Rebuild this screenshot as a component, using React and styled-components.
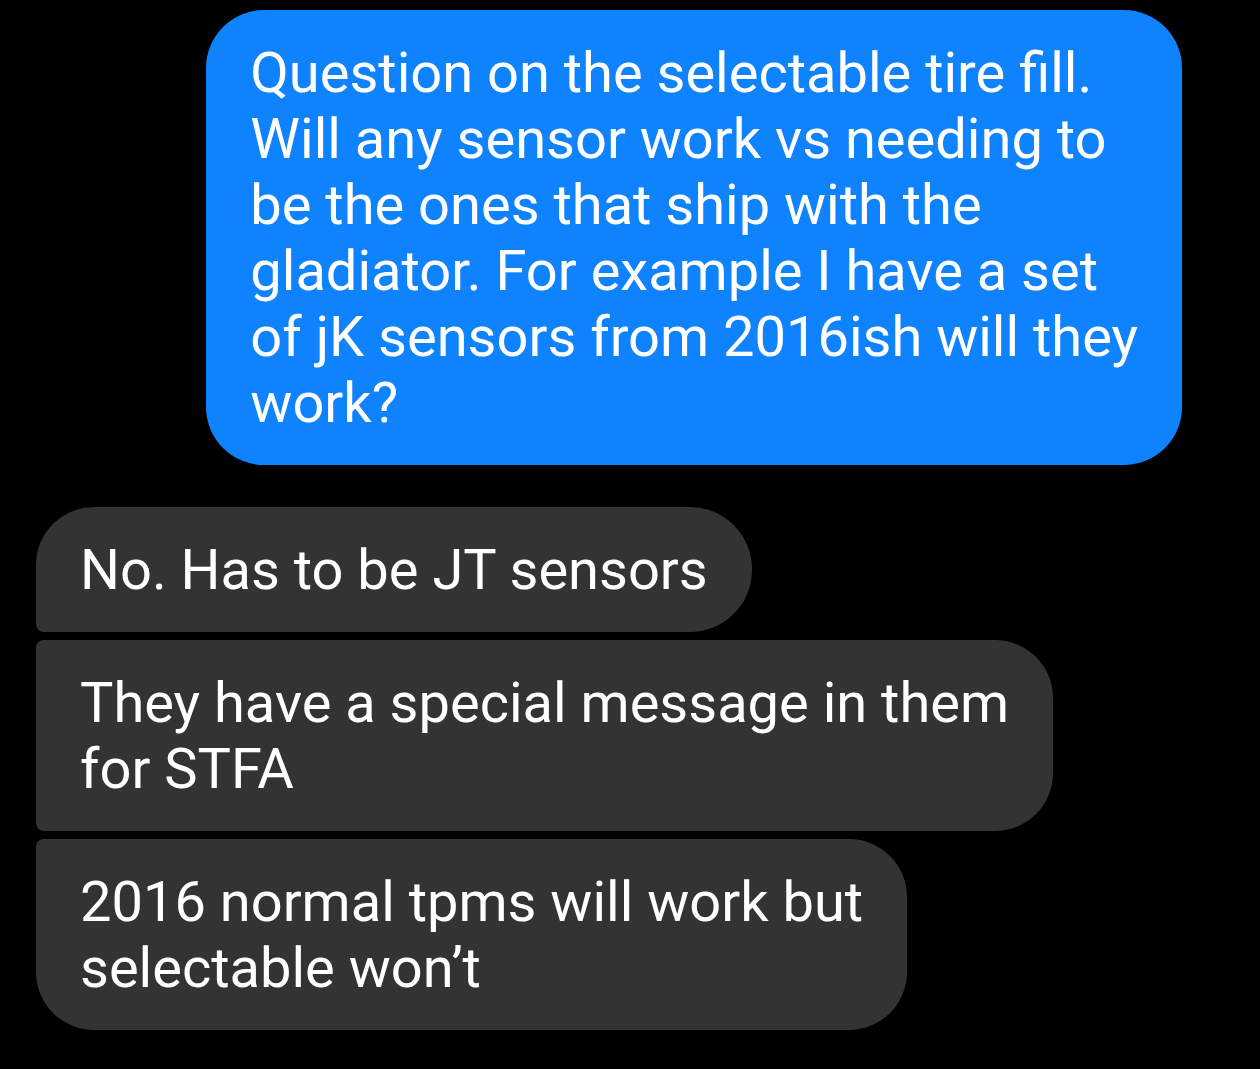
import React from 'react';
import styled, { createGlobalStyle } from 'styled-components';

const GlobalStyle = createGlobalStyle`
	html, body {
		margin: 0;
		padding: 0;
		background: #000;
	}
	body {
		font-family: Roboto, 'Noto Sans', sans-serif;
	}
`;

const Screen = styled.div`
	background: #000;
	display: flex;
	flex-flow: column nowrap;
	min-height: 1069px;
	padding: 10px 78px 0 36px;
	box-sizing: border-box;
`;

const Group = styled.div`
	display: flex;
	flex-flow: column nowrap;
	align-items: ${props => (props.mine ? 'flex-end' : 'flex-start')};
	gap: 8px;
	margin-bottom: 42px;
`;

const Bubble = styled.div`
	background: ${props => (props.mine ? '#0f82fd' : '#333333')};
	color: #fff;
	font-size: 56px;
	line-height: 66px;
	padding: 30px 44px 29px 44px;
	border-radius: ${props => props.radius};
	width: fit-content;
	white-space: nowrap;
`;

const Lines = ({ lines }) =>
	lines.map((line, i) => (
		<React.Fragment key={i}>
			{line}
			{i < lines.length - 1 && <br />}
		</React.Fragment>
	));

const sent = [
	'Question on the selectable tire fill.',
	'Will any sensor work vs needing to',
	'be the ones that ship with the',
	'gladiator. For example I have a set',
	'of jK sensors from 2016ish will they',
	'work?',
];

const received = [
	{ id: 1, lines: ['No. Has to be JT sensors'], radius: '58px 62px 62px 8px' },
	{ id: 2, lines: ['They have a special message in them', 'for STFA'], radius: '8px 58px 58px 8px' },
	{ id: 3, lines: ['2016 normal tpms will work but', 'selectable won\u2019t'], radius: '8px 58px 58px 58px' },
];

const App = () => {
	return (
		<>
			<GlobalStyle />
			<Screen>
				<Group mine>
					<Bubble mine radius="58px">
						<Lines lines={sent} />
					</Bubble>
				</Group>
				<Group>
					{received.map(msg => (
						<Bubble key={msg.id} radius={msg.radius}>
							<Lines lines={msg.lines} />
						</Bubble>
					))}
				</Group>
			</Screen>
		</>
	);
};

export default App;
